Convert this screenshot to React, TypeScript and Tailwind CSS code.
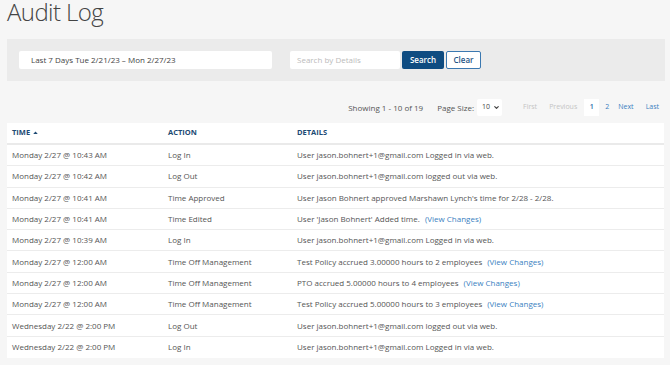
import { ChevronDown } from "lucide-react";

const rows: { time: string; action: string; details: string; link?: boolean }[] = [
  { time: "Monday 2/27 @ 10:43 AM", action: "Log In", details: "User jason.bohnert+1@gmail.com Logged in via web." },
  { time: "Monday 2/27 @ 10:42 AM", action: "Log Out", details: "User jason.bohnert+1@gmail.com logged out via web." },
  { time: "Monday 2/27 @ 10:41 AM", action: "Time Approved", details: "User Jason Bohnert approved Marshawn Lynch's time for 2/28 - 2/28." },
  { time: "Monday 2/27 @ 10:41 AM", action: "Time Edited", details: "User 'Jason Bohnert' Added time.", link: true },
  { time: "Monday 2/27 @ 10:39 AM", action: "Log In", details: "User jason.bohnert+1@gmail.com Logged in via web." },
  { time: "Monday 2/27 @ 12:00 AM", action: "Time Off Management", details: "Test Policy accrued 3.00000 hours to 2 employees", link: true },
  { time: "Monday 2/27 @ 12:00 AM", action: "Time Off Management", details: "PTO accrued 5.00000 hours to 4 employees", link: true },
  { time: "Monday 2/27 @ 12:00 AM", action: "Time Off Management", details: "Test Policy accrued 5.00000 hours to 3 employees", link: true },
  { time: "Wednesday 2/22 @ 2:00 PM", action: "Log Out", details: "User jason.bohnert+1@gmail.com logged out via web." },
  { time: "Wednesday 2/22 @ 2:00 PM", action: "Log In", details: "User jason.bohnert+1@gmail.com Logged in via web." },
];

export default function App() {
  return (
    <div className="min-h-[365px] w-[670px] overflow-hidden bg-[#f6f6f6] px-[7px] text-[#555] [font-family:'Open_Sans',sans-serif]">
      {/* title */}
      <h1 className="-mt-[4px] h-[43px] whitespace-nowrap text-[24px] font-light leading-[32px] tracking-[-0.6px] text-[#444]">
        Audit Log
      </h1>

      {/* filters */}
      <div className="flex h-[42px] w-[658px] items-center bg-[#ebebeb] pl-[12px] text-[8px]">
        <div className="flex h-[18px] w-[253px] items-center rounded-[2px] bg-white pl-[12px] text-[#444]">
          Last 7 Days Tue 2/21/23 – Mon 2/27/23
        </div>
        <div className="ml-[18px] flex h-[18px] w-[110px] items-center rounded-[2px] bg-white pl-[7px] text-[#bbb]">
          Search by Details
        </div>
        <button className="ml-[2px] h-[18px] w-[42px] rounded-[2px] bg-[#0f4c81] font-semibold text-white">
          Search
        </button>
        <button className="ml-[2px] h-[18px] w-[35px] rounded-[2px] border border-[#3b78b0] bg-white font-semibold text-[#1f5586]">
          Clear
        </button>
      </div>

      {/* pager */}
      <div className="mt-[18px] flex h-[17px] w-[658px] items-center justify-end whitespace-nowrap pr-[6px] text-[8px]">
        <span className="text-[#555]">Showing 1 - 10 of 19</span>
        <span className="ml-[14px] text-[#555]">Page Size:</span>
        <div className="ml-[3px] flex h-[17px] w-[25px] items-center gap-[3px] rounded-[2px] bg-white pl-[5px] text-[7px] text-[#444]">
          10
          <ChevronDown className="h-[7px] w-[7px]" strokeWidth={4} />
        </div>
        <div className="ml-[21px] flex items-center text-[7px]">
          <span className="text-[#c4c4c4]">First</span>
          <span className="ml-[12px] text-[#c4c4c4]">Previous</span>
          <span className="ml-[7px] flex h-[17px] w-[15px] items-center justify-center bg-white font-semibold text-[#2a6aa8]">1</span>
          <span className="ml-[6px] text-[#3a7fc1]">2</span>
          <span className="ml-[9px] text-[#3a7fc1]">Next</span>
          <span className="ml-[12px] text-[#3a7fc1]">Last</span>
        </div>
      </div>

      {/* table */}
      <div className="mt-[7px] w-[657px] bg-white text-[8px]">
        <div className="grid h-[22px] grid-cols-[156px_129px_1fr] items-center border-b-2 border-[#eaeaea] pl-[5px] text-[7.5px] font-bold text-[#1d4a73]">
          <div className="flex items-center gap-[3px]">
            TIME
            <svg width="5" height="3" viewBox="0 0 6 4" className="mt-[-1px]">
              <path d="M0 4 L3 0.5 L6 4 Z" fill="#1d4a73" />
            </svg>
          </div>
          <div>ACTION</div>
          <div>DETAILS</div>
        </div>
        {rows.map((r, i) => (
          <div
            key={i}
            className={`grid h-[21.3px] grid-cols-[156px_129px_1fr] items-center whitespace-nowrap pl-[5px] ${i < rows.length - 1 ? "border-b border-[#ececec]" : ""}`}
          >
            <div>{r.time}</div>
            <div>{r.action}</div>
            <div>
              {r.details}
              {r.link && <span className="ml-[5px] text-[#3a7fc1]">(View Changes)</span>}
            </div>
          </div>
        ))}
      </div>
    </div>
  );
}
